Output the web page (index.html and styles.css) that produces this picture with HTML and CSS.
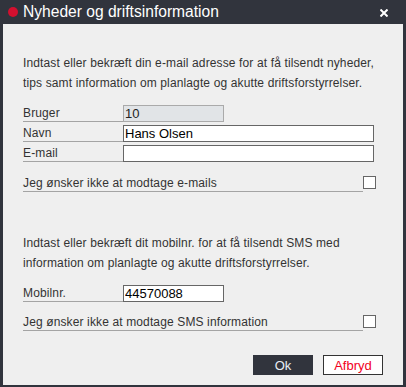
FILE: index.html
```html
<!DOCTYPE html>
<html lang="da">
<head>
    <meta charset="UTF-8">
    <meta name="viewport" content="width=device-width, initial-scale=1.0">
    <title>Nyheder og driftsinformation</title>
    <link rel="stylesheet" href="styles.css">
</head>
<body>
    <div class="dialog">
        <div class="titlebar">
            <span class="dot"></span>
            <span class="title">Nyheder og driftsinformation</span>
            <svg class="close" width="8" height="8" viewBox="0 0 8 8">
                <path d="M0.5 0.5 L7.5 7.5 M7.5 0.5 L0.5 7.5" stroke="#ffffff" stroke-width="2"/>
            </svg>
        </div>

        <div class="content">
            <p class="intro">Indtast eller bekræft din e-mail adresse for at få tilsendt nyheder, tips samt information om planlagte og akutte driftsforstyrrelser.</p>

            <div class="field first">
                <label for="bruger">Bruger</label>
                <input type="text" id="bruger" class="input short readonly" value="10" readonly>
            </div>
            <div class="field">
                <label for="navn">Navn</label>
                <input type="text" id="navn" class="input long" value="Hans Olsen">
            </div>
            <div class="field">
                <label for="email">E-mail</label>
                <input type="text" id="email" class="input long" value="">
            </div>

            <div class="check-row">
                <label for="noEmail">Jeg ønsker ikke at modtage e-mails</label>
                <input type="checkbox" id="noEmail" class="check">
            </div>

            <p class="intro second">Indtast eller bekræft dit mobilnr. for at få tilsendt SMS med information om planlagte og akutte driftsforstyrrelser.</p>

            <div class="field first">
                <label for="mobil">Mobilnr.</label>
                <input type="text" id="mobil" class="input short" value="44570088">
            </div>

            <div class="check-row sms">
                <label for="noSms">Jeg ønsker ikke at modtage SMS information</label>
                <input type="checkbox" id="noSms" class="check">
            </div>

            <div class="actions">
                <button class="ok-btn">Ok</button>
                <button class="cancel-btn">Afbryd</button>
            </div>
        </div>
    </div>
</body>
</html>
```

FILE: styles.css
```css
body {
    margin: 0;
    font-family: "Liberation Sans", Arial, sans-serif;
}

.dialog {
    width: 406px;
    height: 387px;
    box-sizing: border-box;
    background-color: #31343d;
    padding: 0 3px 2px 3px;
    display: flex;
    flex-direction: column;
}

.titlebar {
    height: 24px;
    display: flex;
    align-items: center;
    padding-left: 5px;
}

.dot {
    width: 10px;
    height: 10px;
    border-radius: 50%;
    background-color: #d3102f;
    margin-top: -1px;
}

.title {
    color: #ffffff;
    font-size: 15.6px;
    line-height: 24px;
    margin-left: 5px;
    flex: 1;
}

.close {
    margin-right: 15px;
    margin-top: 1px;
}

.content {
    flex: 1;
    background-color: #efefef;
    padding: 29px 20px 0 20px;
    display: flex;
    flex-direction: column;
}

.intro {
    margin: 0;
    font-size: 12px;
    letter-spacing: 0.13px;
    line-height: 20px;
    color: #333;
    width: 360px;
}

.intro.second {
    margin-top: 41px;
}

.field {
    display: flex;
    align-items: flex-end;
    height: 20px;
}

.field.first {
    margin-top: 9px;
}

.field label,
.check-row label {
    box-sizing: border-box;
    height: 20px;
    padding-top: 3px;
    line-height: 17px;
    font-size: 12px;
    letter-spacing: 0.13px;
    color: #333;
    border-bottom: 1px solid #a4a4a4;
}

.field label {
    width: 100px;
}

.input {
    box-sizing: border-box;
    height: 17px;
    border: 1px solid #666;
    background-color: #fff;
    padding: 0 1px;
    margin: 0;
    font-family: "Liberation Sans", Arial, sans-serif;
    font-size: 13px;
    color: #000;
    outline: none;
}

.input.short {
    width: 101px;
}

.input.long {
    width: 251px;
}

.input.readonly {
    background-color: #e1e4e7;
    border-color: #aaa;
    color: #222;
}

.check-row {
    display: flex;
    align-items: flex-start;
    height: 20px;
    margin-top: 10px;
}

.check-row.sms {
    margin-top: 9px;
}

.check-row label {
    width: 340px;
}

.check {
    appearance: none;
    -webkit-appearance: none;
    width: 13px;
    height: 13px;
    margin: 4px 0 0 0;
    box-sizing: border-box;
    border: 1px solid #666;
    background-color: #fff;
}

.actions {
    display: flex;
    justify-content: flex-end;
    gap: 10px;
    margin-top: 24px;
}

.ok-btn,
.cancel-btn {
    width: 60px;
    height: 20px;
    box-sizing: border-box;
    font-family: "Liberation Sans", Arial, sans-serif;
    font-size: 13px;
    padding: 0;
    cursor: pointer;
}

.ok-btn {
    background-color: #31343d;
    color: #e8eef6;
    border: none;
}

.cancel-btn {
    background-color: #fff;
    color: #f2001c;
    border: 1px solid #333;
}
```
